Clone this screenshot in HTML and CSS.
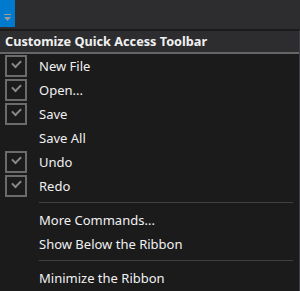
FILE: index.html
```html
<!DOCTYPE html>
<html>
<head>
<meta charset="utf-8">
<link rel="stylesheet" href="styles.css">
</head>
<body>
<div class="topbar">
  <div class="qat-btn">
    <svg width="9" height="9" viewBox="0 0 9 9"><rect x="1" y="1" width="7" height="1" fill="#9a9a9a"/><path d="M1 4h7l-3.5 4z" fill="#9a9a9a"/></svg>
  </div>
</div>
<div class="panel">
  <div class="header">Customize Quick Access Toolbar</div>
  <div class="list">
    <div class="item"><span class="box checked"></span><span class="label">New File</span></div>
    <div class="item"><span class="box checked"></span><span class="label">Open...</span></div>
    <div class="item"><span class="box checked"></span><span class="label">Save</span></div>
    <div class="item"><span class="box"></span><span class="label">Save All</span></div>
    <div class="item"><span class="box checked"></span><span class="label">Undo</span></div>
    <div class="item"><span class="box checked"></span><span class="label">Redo</span></div>
    <div class="sep"></div>
    <div class="item"><span class="box none"></span><span class="label">More Commands...</span></div>
    <div class="item"><span class="box none"></span><span class="label">Show Below the Ribbon</span></div>
    <div class="sep"></div>
    <div class="item"><span class="box none"></span><span class="label">Minimize the Ribbon</span></div>
  </div>
</div>
</body>
</html>
```
FILE: styles.css
```css
html, body {
  margin: 0;
  padding: 0;
  background: #1b1b1c;
  width: 300px;
  height: 291px;
  overflow: hidden;
  font-family: "Noto Sans", "Open Sans", sans-serif;
  color: #f1f1f1;
}
.topbar {
  height: 29px;
  background: #2d2d30;
  display: flex;
}
.qat-btn {
  width: 15px;
  height: 27px;
  background: #007acc;
  display: flex;
  align-items: flex-end;
  justify-content: center;
  padding-bottom: 5px;
  box-sizing: border-box;
}
.panel {
  border-top: 2px solid #1b1b1c;
  border-right: 1px solid #3f3f46;
  height: 262px;
  box-sizing: border-box;
}
.header {
  height: 21px;
  background: #2d2d30;
  border-bottom: 2px solid #666668;
  font-weight: bold;
  font-size: 12.7px;
  line-height: 21px;
  padding-left: 5px;
}
.list {
  padding-top: 0;
}
.item {
  height: 24px;
  display: flex;
  align-items: center;
  font-size: 13px;
}
.box {
  width: 22px;
  height: 22px;
  box-sizing: border-box;
  margin-left: 5px;
  margin-right: 12px;
  flex: none;
  position: relative;
}
.box.checked {
  border: 2px solid #6b6b6b;
}
.box.checked::after {
  content: "";
  position: absolute;
  left: 5px;
  top: 3px;
  width: 7px;
  height: 4px;
  border-left: 2px solid #8a8a8a;
  border-bottom: 2px solid #8a8a8a;
  transform: rotate(-45deg);
}
.sep {
  height: 1px;
  background: #3f3f46;
  margin: 4px 6px 5px 39px;
}
```
